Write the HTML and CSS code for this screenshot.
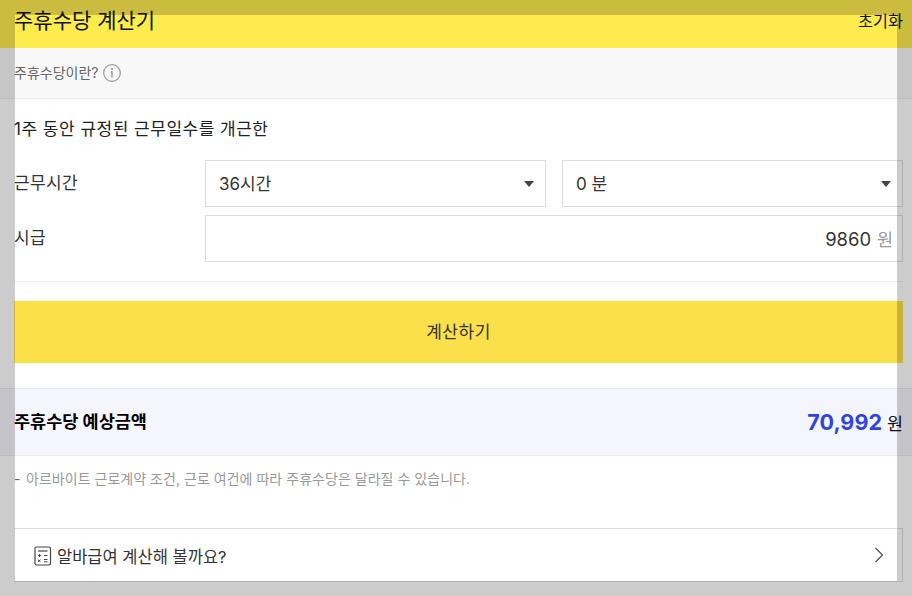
FILE: index.html
```html
<!DOCTYPE html>
<html lang="ko">
<head>
<meta charset="utf-8">
<title>주휴수당 계산기</title>
<link rel="stylesheet" href="styles.css">
</head>
<body>
<div class="page">
  <header class="top">
    <h1 class="title">주휴수당 계산기</h1>
    <a class="reset">초기화</a>
  </header>
  <div class="info">
    <span>주휴수당이란?</span>
    <svg class="info-icon" width="18" height="18" viewBox="0 0 18 18" aria-hidden="true">
      <circle cx="9" cy="9" r="8.300" fill="none" stroke="#999" stroke-width="1.200"/>
      <circle cx="9" cy="5" r="1" fill="#8c8c8c"/>
      <path d="M7.800 7.800H9v6" stroke="#8c8c8c" stroke-width="1.200" fill="none"/>
    </svg>
  </div>
  <section class="form">
    <p class="lead">1주 동안 규정된 근무일수를 개근한</p>
    <div class="row">
      <label class="label">근무시간</label>
      <div class="fields">
        <div class="field select"><span class="opt">36시간</span><i class="caret"></i></div>
        <div class="field select"><span class="opt">0 분</span><i class="caret"></i></div>
      </div>
    </div>
    <div class="row">
      <label class="label">시급</label>
      <div class="fields">
        <div class="field amount"><span class="value">9860</span><span class="unit">원</span></div>
      </div>
    </div>
    <div class="divider"></div>
    <button class="submit" type="button">계산하기</button>
  </section>
  <section class="result">
    <strong class="result-label">주휴수당 예상금액</strong>
    <div class="result-value"><b class="sum">70,992</b><span class="won">원</span></div>
  </section>
  <p class="note"><span class="dash">-</span>아르바이트 근로계약 조건, 근로 여건에 따라 주휴수당은 달라질 수 있습니다.</p>
  <a class="link">
    <svg class="calc" width="18" height="20" viewBox="0 0 18 20" aria-hidden="true">
      <rect x="1" y="1" width="15.500" height="18" rx="1.500" fill="none" stroke="#444" stroke-width="1.200"/>
      <path d="M4 5h9.500" stroke="#444" stroke-width="1.200" fill="none"/>
      <path d="M4 9.500h3M5.500 8v3M10 9.500h3.500M4 13.800l2.500 2M6.500 13.800l-2.500 2M10 13.500h3.500M10 15.800h3.500" stroke="#444" stroke-width="1" fill="none"/>
    </svg>
    <span class="link-text">알바급여 계산해 볼까요?</span>
    <svg class="chev" width="10" height="16" viewBox="0 0 10 16" aria-hidden="true">
      <path d="M1.500 1l7 7-7 7" fill="none" stroke="#555" stroke-width="1.300"/>
    </svg>
  </a>
</div>
<div class="spotlight"></div>
</body>
</html>
```
FILE: styles.css
```css
* { box-sizing: border-box; }
html, body { margin: 0; height: 100%; overflow: hidden; background: #fff; }
body {
  font-family: "Inter", "Noto Sans CJK KR", sans-serif;
  color: #222;
}
.page { display: flex; flex-direction: column; }
.top {
  height: 48px;
  background: #feec4f;
  padding: 8px 9px 0 14px;
  display: flex;
  justify-content: space-between;
  align-items: flex-start;
}
.title { margin: 0; font-size: 21px; font-weight: 400; line-height: 26px; color: #111; }
.reset { font-size: 16.300px; line-height: 26px; color: #111; }
.info {
  height: 51px;
  background: #f8f8f8;
  border-bottom: 1px solid #ececec;
  padding: 0 14px 1px;
  display: flex;
  align-items: center;
  gap: 4px;
  font-size: 14px;
  color: #666;
}
.info span { padding-bottom: 2px; }
.info-icon { margin-left: 1px; }
.form { padding: 0 9px 0 14px; display: flex; flex-direction: column; }
.lead { margin: 19px 0 20px; font-size: 17px; letter-spacing: .5px; line-height: 22px; color: #222; }
.row { display: flex; align-items: center; margin-bottom: 8px; }
.label { width: 191px; font-size: 17px; letter-spacing: .36px; line-height: 22px; padding-bottom: 1px; flex: none; color: #333; }
.fields { flex: 1; display: flex; gap: 16px; }
.field {
  flex: 1;
  height: 47px;
  border: 1px solid #dcdcdc;
  display: flex;
  align-items: center;
  color: #333;
}
.select { justify-content: space-between; padding: 0 11px 0 13px; }
.opt { font-size: 17px; padding-bottom: 2px; }
.caret {
  width: 0; height: 0;
  border-left: 5px solid transparent;
  border-right: 5px solid transparent;
  border-top: 6px solid #444;
}
.amount { justify-content: flex-end; padding: 0 9px; gap: 6px; }
.value { font-size: 18.400px; color: #333; }
.unit { font-size: 17.400px; color: #999; }
.divider { height: 1px; background: #eee; margin: 11px 0 19px; }
.submit {
  height: 62px;
  border: 0;
  background: #fbe04a;
  font: inherit;
  font-size: 17px;
  letter-spacing: .5px;
  color: #333;
  padding: 0 0 3px;
}
.result {
  margin-top: 25px;
  height: 68px;
  background: #f5f6fd;
  border-top: 1px solid #e9eaf0;
  border-bottom: 1px solid #e9eaf0;
  padding: 0 9px 0 14px;
  display: flex;
  justify-content: space-between;
  align-items: center;
}
.result-label { font-size: 17.500px; font-weight: 700; color: #000; padding-bottom: 4px; }
.result-value { display: flex; align-items: center; gap: 5px; }
.sum { font-size: 21.600px; font-weight: 700; color: #2f45dd; }
.won { font-size: 17.400px; color: #111; }
.note {
  margin: 13px 0 39px;
  padding: 0 14px;
  font-size: 14px;
  letter-spacing: .03px;
  line-height: 20px;
  color: #999;
}
.dash { display: inline-block; width: 12px; color: #666; }
.link {
  margin: 0 9px 0 14px;
  height: 54px;
  border: 1px solid #dedede;
  border-left: 0;
  padding: 2px 18px 0 20px;
  display: flex;
  align-items: center;
  gap: 5px;
  font-size: 16.500px;
  color: #333;
}
.link-text { flex: 1; }
.chev { margin-top: -2px; }
.spotlight {
  position: fixed;
  left: 15px;
  top: 15px;
  width: 882px;
  height: 566px;
  box-shadow: 0 0 0 2000px rgba(0, 0, 0, .2);
  pointer-events: none;
}
```
